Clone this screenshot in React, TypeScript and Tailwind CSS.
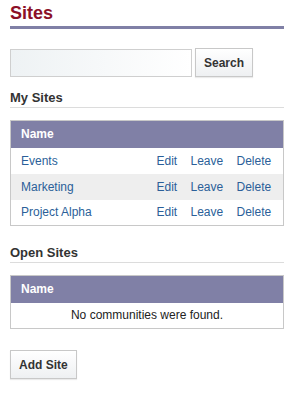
const sites = ['Events', 'Marketing', 'Project Alpha']

function SectionTitle({ children, className }: { children: React.ReactNode; className: string }) {
  return (
    <h2 className={`${className} border-b border-[#dcdcdc] pb-[1px] text-[13px] font-bold leading-[16px] text-[#333]`}>
      {children}
    </h2>
  )
}

function Button({ children }: { children: React.ReactNode }) {
  return (
    <button className="h-[29px] border border-[#c8c8c8] bg-gradient-to-b from-white to-[#eef0f2] px-[8px] text-[12px] font-bold text-[#333] shadow-[0_1px_1px_rgba(0,0,0,0.08)]">
      {children}
    </button>
  )
}

export default function App() {
  return (
    <div className="h-[400px] w-[296px] bg-white pl-[10px] pt-[2px] font-['Liberation_Sans',Arial,sans-serif]">
      <div className="w-[274px]">
        <h1 className="text-[18px] font-bold leading-[22px] text-[#8c1027]">Sites</h1>
        <div className="mt-[2px] h-[3px] bg-[#8080a6]" />

        <div className="mt-[19px] flex items-center gap-[3px]">
          <input className="h-[28px] w-[182px] border border-[#cfcfcf] bg-gradient-to-r from-[#eef2f4] to-white outline-none" />
          <Button>Search</Button>
        </div>

        <SectionTitle className="mt-[13px]">My Sites</SectionTitle>

        <table className="mt-[12px] w-full border border-[#c8c8c8] text-[12px]">
          <thead>
            <tr className="h-[27px] bg-[#8080a6] text-left text-white">
              <th className="pl-[10px] font-bold" colSpan={4}>Name</th>
            </tr>
          </thead>
          <tbody>
            {sites.map((site, i) => (
              <tr key={site} className={`h-[26px] text-[#2b5f99] ${i === 1 ? 'bg-[#eeeeee]' : 'bg-white'}`}>
                <td className="pl-[10px]">{site}</td>
                <td className="w-[34px]">Edit</td>
                <td className="w-[46px]">Leave</td>
                <td className="w-[47px]">Delete</td>
              </tr>
            ))}
          </tbody>
        </table>

        <SectionTitle className="mt-[19px]">Open Sites</SectionTitle>

        <table className="mt-[12px] w-full border border-[#c8c8c8] text-[12px]">
          <thead>
            <tr className="h-[27px] bg-[#8080a6] text-left text-white">
              <th className="pl-[10px] font-bold">Name</th>
            </tr>
          </thead>
          <tbody>
            <tr className="h-[26px] bg-white text-[#222]">
              <td className="text-center">No communities were found.</td>
            </tr>
          </tbody>
        </table>

        <div className="mt-[21px]">
          <Button>Add Site</Button>
        </div>
      </div>
    </div>
  )
}
